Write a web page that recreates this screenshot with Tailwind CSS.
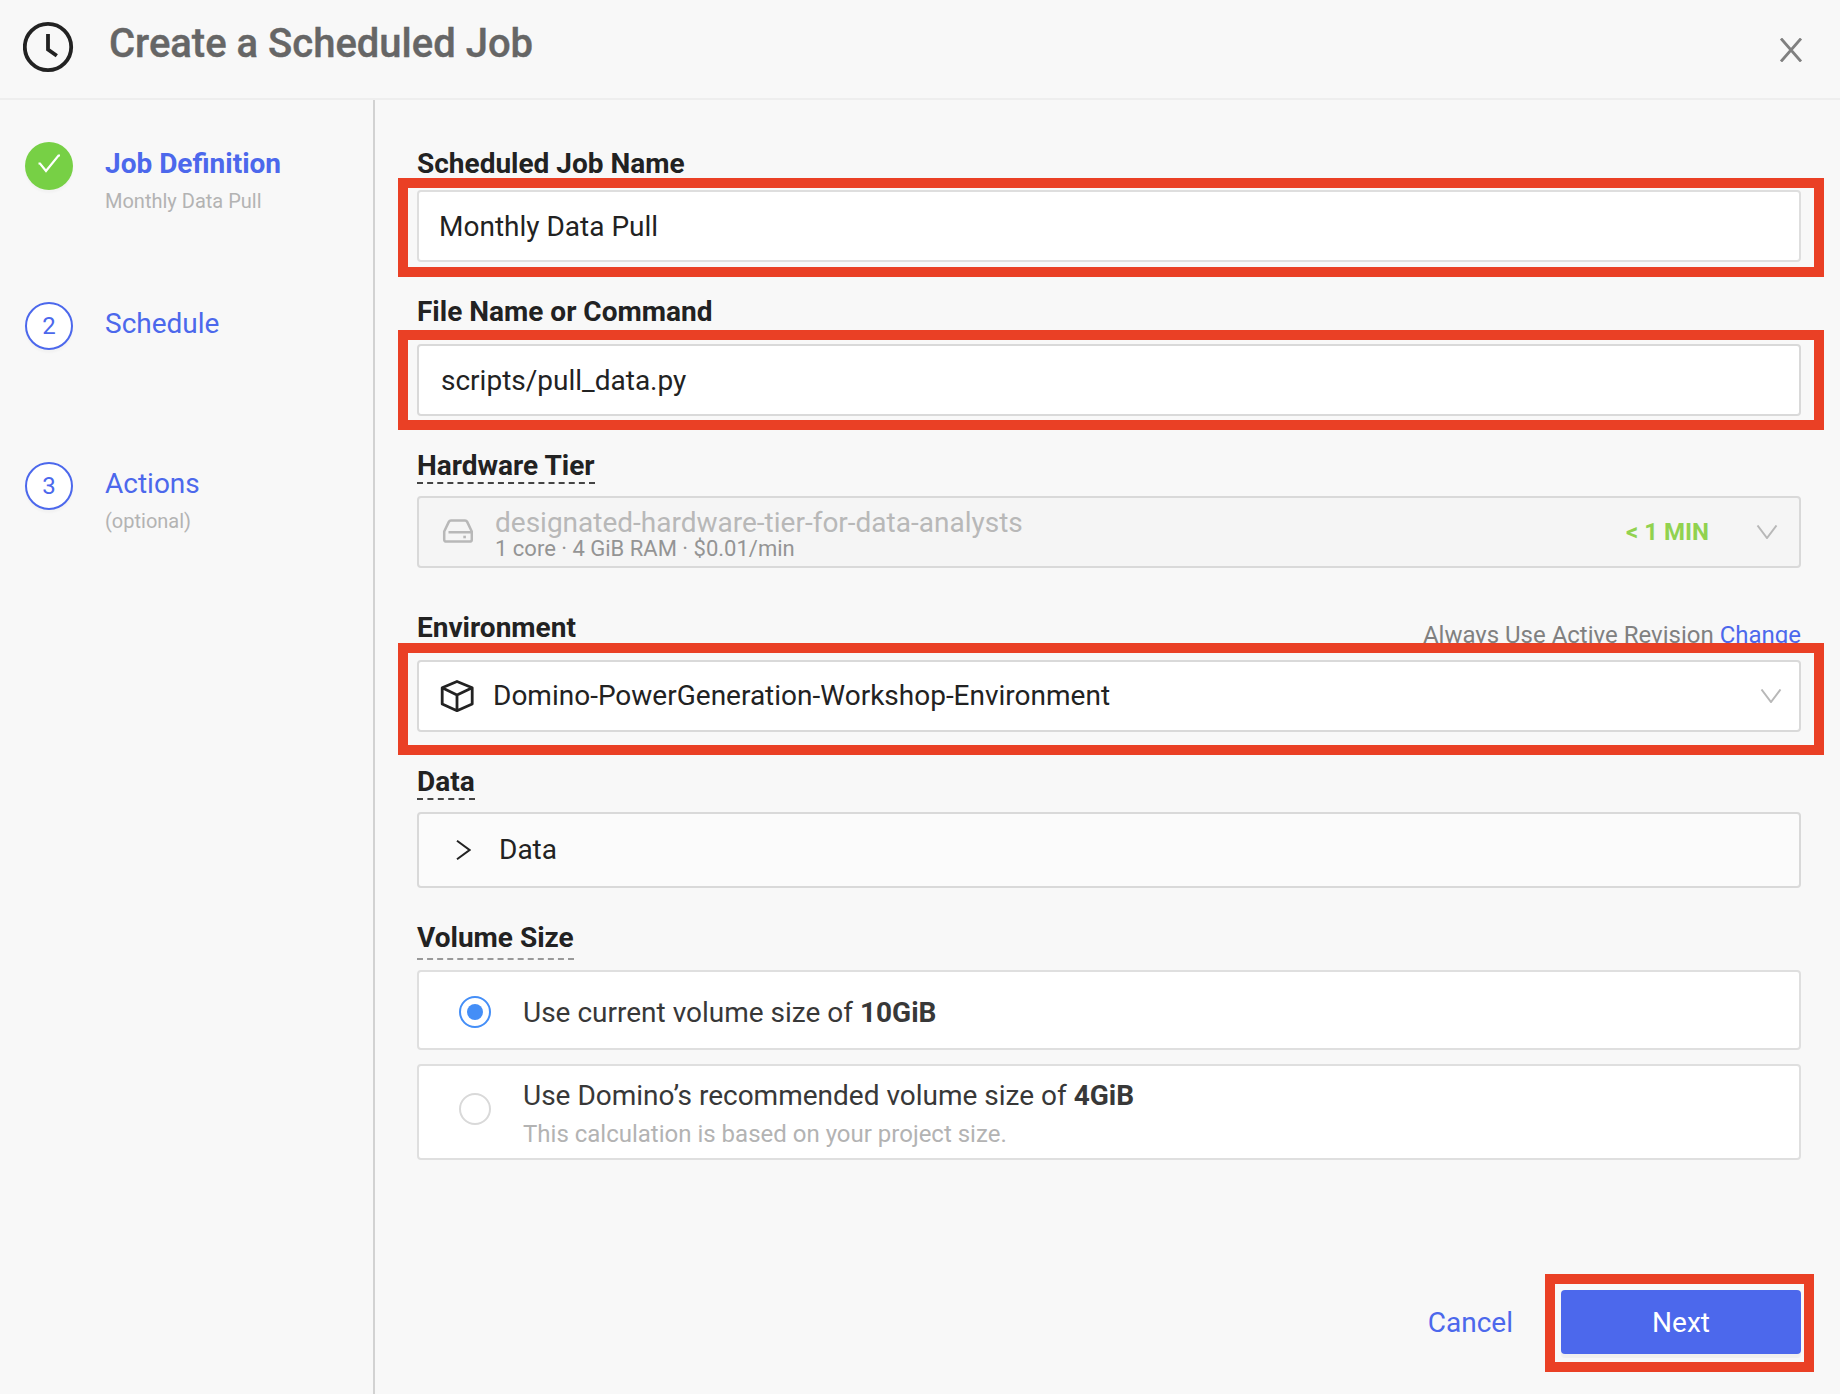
<!DOCTYPE html>
<html lang="en">
<head>
<meta charset="utf-8">
<title>Create a Scheduled Job</title>
<script src="https://cdn.jsdelivr.net/npm/@tailwindcss/browser@4"></script>
</head>
<body class="relative flex h-[1394px] w-[1840px] flex-col overflow-hidden bg-[#f8f8f8] font-['Roboto',sans-serif] text-[28px] leading-8 text-[#222] antialiased">
<header class="flex h-[100px] shrink-0 items-start border-b-2 border-[#eee] pl-[23px] pr-[37px] pt-[21px]">
  <svg class="size-[52px]" viewBox="0 0 52 52" fill="none" stroke="#222"><circle cx="25" cy="26" r="23.200" stroke-width="3.8"/><path d="M25 13v15.500l8.800 6.300" stroke-width="3.8"/></svg>
  <h1 class="ml-[34px] pt-px text-[40px] font-medium leading-[44px] text-[#666] [-webkit-text-stroke:0.4px_#666]">Create a Scheduled Job</h1>
  <svg class="ml-auto mt-[17px] size-6" viewBox="0 0 24 24" fill="none" stroke="#808080" stroke-width="2.8"><path d="M2 0.5 22 23.500M22 0.500 2 23.500"/></svg>
</header>
<div class="flex grow">
  <nav class="flex w-[375px] shrink-0 flex-col border-r-2 border-[#d2d2d2] pl-[25px] pt-[42px] text-[#4c68ec]">
    <div class="flex h-40 gap-8">
      <div class="flex size-12 items-center justify-center rounded-full bg-[#77d045] shadow-[0_3px_2px_#00000006]">
        <svg class="mb-1 size-6" viewBox="0 0 24 24" fill="none" stroke="#fff" stroke-width="2.2"><path d="M1.500 11.500h1.500l6 7.500L21.500 3.500h1.500"/></svg>
      </div>
      <div class="pt-1.5"><div class="font-bold">Job Definition</div><div class="mt-[5px] text-xl leading-8 text-[#b3b3b3]">Monthly Data Pull</div></div>
    </div>
    <div class="flex h-40 gap-8">
      <div class="flex size-12 items-center justify-center rounded-full border-2 border-[#4c68ec] bg-white text-2xl shadow-[0_3px_2px_#00000006]">2</div>
      <div class="pt-1.5">Schedule</div>
    </div>
    <div class="flex h-40 gap-8">
      <div class="flex size-12 items-center justify-center rounded-full border-2 border-[#4c68ec] bg-white text-2xl shadow-[0_3px_2px_#00000006]">3</div>
      <div class="pt-1.5"><div>Actions</div><div class="mt-[5px] text-xl leading-8 text-[#b3b3b3]">(optional)</div></div>
    </div>
  </nav>
  <main class="flex grow flex-col items-start pl-[42px] pr-[39px] pt-12">
    <label class="font-bold">Scheduled Job Name</label>
    <div class="mt-2.5 flex h-[72px] w-full items-center rounded border-2 border-[#dedede] bg-white pl-5 pt-0.5">Monthly Data Pull</div>
    <label class="mt-[34px] font-bold">File Name or Command</label>
    <div class="mt-4 flex h-[72px] w-full items-center rounded border-2 border-[#d9d9d9] bg-white pl-[22px] pt-0.5">scripts/pull_data.py</div>
    <label class="mt-[34px] h-[34px] border-b-2 border-dashed border-[#444] font-bold">Hardware Tier</label>
    <div class="mt-3 flex h-[72px] w-full items-center rounded border-2 border-[#d9d9d9] bg-[#f5f5f5] pl-[22px] pr-[21px]">
      <svg class="size-8" viewBox="0 0 32 32" fill="none" stroke="#b8b8b8" stroke-width="2.5" stroke-linejoin="round"><path d="M10 4.400h14q1.500 0 2.200 1.500L30.800 15.500v8q0 2.100-2.100 2.100H5.300q-2.100 0-2.100-2.100v-8L7.800 5.900Q8.500 4.400 10 4.400zM7.500 16.200H30"/><path d="M22.300 19.700h2.600v2.600h-2.600z" fill="#b8b8b8" stroke="none"/></svg>
      <div class="ml-[22px] flex flex-col pt-1.5"><div class="leading-7 text-[#b8b8b8]">designated-hardware-tier-for-data-analysts</div><div class="text-[22px] leading-6 text-[#949494]">1 core · 4 GiB RAM · $0.01/min</div></div>
      <div class="ml-auto text-2xl font-bold text-[#91d24f]">&lt; 1 MIN</div>
      <svg class="ml-[47px] h-[14px] w-[22px]" viewBox="0 0 22 14" fill="none" stroke="#b8b8b8" stroke-width="2"><path d="M1.500 0.500 11 13 20.500 0.500"/></svg>
    </div>
    <div class="mt-11 flex w-full items-start justify-between"><label class="font-bold">Environment</label><div class="pt-[7px] text-2xl leading-8 text-[#808080]">Always Use Active Revision <span class="text-[#4c68ec]">Change</span></div></div>
    <div class="mt-[9px] flex h-[72px] w-full items-center rounded border-2 border-[#d9d9d9] bg-white pl-[20px] pr-[17px]">
      <svg class="size-9" viewBox="0 0 36 36" fill="none" stroke="#222" stroke-width="2.8" stroke-linejoin="round"><path d="M18 3.500 33.200 9.800V26L18 32.700 3.200 26V9.800zM3.200 9.800 18 17 33.200 9.800M18 17V32.500"/></svg>
      <div class="ml-[18px]">Domino-PowerGeneration-Workshop-Environment</div>
      <svg class="ml-auto h-[14px] w-[22px]" viewBox="0 0 22 14" fill="none" stroke="#b8b8b8" stroke-width="2"><path d="M1.500 0.500 11 13 20.500 0.500"/></svg>
    </div>
    <label class="mt-[34px] h-[34px] border-b-2 border-dashed border-[#444] font-bold">Data</label>
    <div class="mt-3 flex h-[76px] w-full items-center rounded border-2 border-[#d9d9d9] bg-[#fbfbfb] pl-[37px]">
      <svg class="h-5 w-[15px]" viewBox="0 0 15 20" fill="none" stroke="#222" stroke-width="2"><path d="M1 0.800 13.500 10 1 19.200"/></svg>
      <div class="ml-7">Data</div>
    </div>
    <label class="mt-[34px] h-[38px] border-b-2 border-dashed border-[#999] font-bold">Volume Size</label>
    <div class="mt-[10px] flex h-20 w-full items-center rounded border-2 border-[#dfdfdf] bg-white pl-10 pt-1 text-[#383838]">
      <div class="flex size-8 items-center justify-center rounded-full border-2 border-[#448ef7]"><div class="size-4 rounded-full bg-[#448ef7]"></div></div>
      <div class="ml-8 pt-0.5">Use current volume size of <b class="font-bold">10GiB</b></div>
    </div>
    <div class="mt-[14px] flex h-24 w-full items-start rounded border-2 border-[#dfdfdf] bg-white pl-10 text-[#383838]">
      <div class="mt-[27px] size-8 rounded-full border-2 border-[#d9d9d9]"></div>
      <div class="ml-8 pt-[14px]"><div>Use Domino’s recommended volume size of <b class="font-bold">4GiB</b></div><div class="mt-1.5 text-2xl leading-8 text-[#b3b3b3]">This calculation is based on your project size.</div></div>
    </div>
    <div class="mt-[130px] flex items-center self-end">
      <div class="pt-0.5 text-[#4c68ec]">Cancel</div>
      <div class="ml-12 flex h-16 w-60 items-center justify-center rounded bg-[#4c68ec] pt-0.5 text-white shadow-[0_4px_1px_#00000009]">Next</div>
    </div>
  </main>
</div>
<div class="absolute left-[398px] top-[178px] h-[99px] w-[1426px] border-10 border-[#ea4025]"></div>
<div class="absolute left-[398px] top-[330px] h-[100px] w-[1426px] border-10 border-[#ea4025]"></div>
<div class="absolute left-[398px] top-[643px] h-[112px] w-[1426px] border-10 border-[#ea4025]"></div>
<div class="absolute left-[1545px] top-[1274px] h-[98px] w-[269px] border-10 border-[#ea4025]"></div>
</body>
</html>
